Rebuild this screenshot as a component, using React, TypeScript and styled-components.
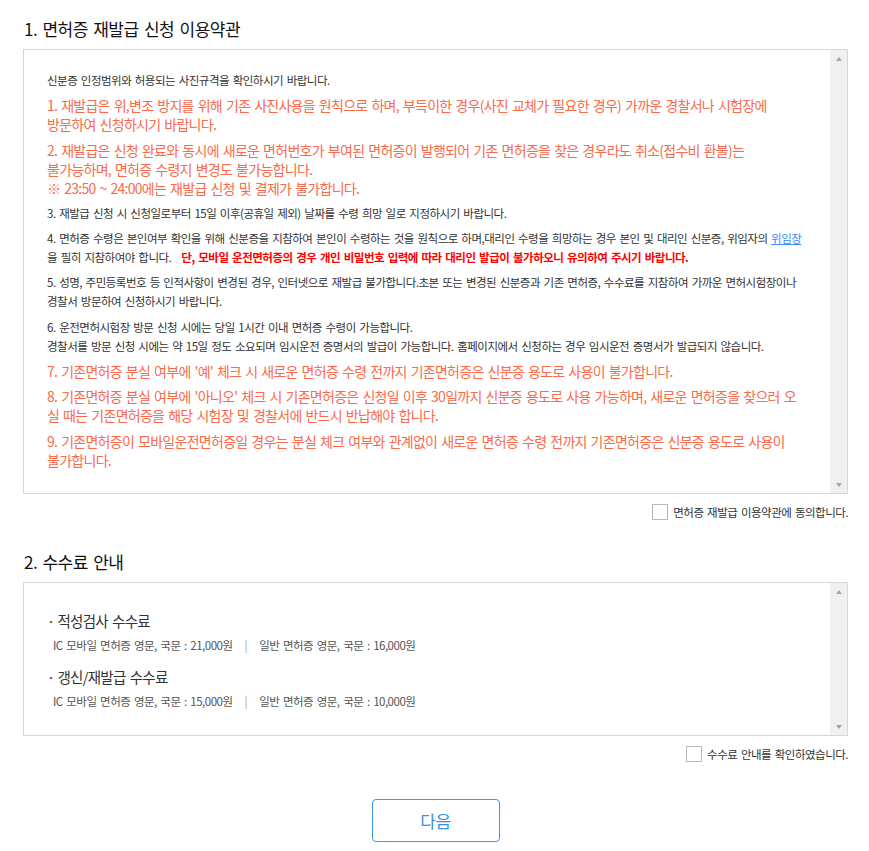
import styled, { createGlobalStyle, css } from "styled-components";

const GlobalStyle = createGlobalStyle`
  html, body {
    margin: 0;
    padding: 0;
    background: #fff;
  }
  body {
    font-family: "Noto Sans CJK KR", "Noto Sans", sans-serif;
    color: #333;
  }
`;

const Page = styled.div`
  width: 825px;
  padding: 18px 21px 40px 23px;
`;

const SectionTitle = styled.h2<{ $spaced?: boolean }>`
  margin: ${(p) => (p.$spaced ? "31px" : "0")} 0 9px 1px;
  font-size: 17px;
  line-height: 22px;
  font-weight: 400;
  letter-spacing: -0.5px;
  word-spacing: 2px;
  color: #111;
`;

const ScrollBox = styled.div<{ $height: number }>`
  display: flex;
  box-sizing: border-box;
  height: ${(p) => p.$height}px;
  border: 1px solid #d7d7d7;
  background: #fff;
`;

const ScrollContent = styled.div<{ $padTop: number }>`
  flex: 1;
  min-width: 0;
  overflow: hidden;
  padding: ${(p) => p.$padTop}px 12px 0 23px;
`;

const Scrollbar = styled.div`
  width: 17px;
  flex-shrink: 0;
  background: #f0f0f0;
  display: flex;
  flex-direction: column;
  justify-content: space-between;
`;

const ArrowCell = styled.div<{ $dir: "up" | "down" }>`
  height: 17px;
  display: flex;
  align-items: center;
  justify-content: center;
  &::after {
    content: "";
    border-left: 3.5px solid transparent;
    border-right: 3.5px solid transparent;
    ${(p) =>
      p.$dir === "up"
        ? "border-bottom: 4px solid #a6a6a6;"
        : "border-top: 4px solid #a6a6a6;"}
  }
`;

const smallText = css`
  font-size: 11.5px;
  letter-spacing: -0.5px;
  word-spacing: 1.5px;
`;

const Note = styled.p<{ $alert?: boolean }>`
  margin: 0 0 6.3px;
  line-height: 19px;
  ${(p) =>
    p.$alert
      ? css`
          font-size: 14px;
          letter-spacing: -0.72px;
          word-spacing: 1.5px;
          color: #fa6a4b;
        `
      : css`
          ${smallText};
          color: #333;
        `}
`;

const Strong = styled.span`
  margin-left: 10px;
  font-weight: 700;
  color: #ff0000;
`;

const Link = styled.a`
  color: #3d8bf7;
  text-decoration: underline;
`;

const FeeHeading = styled.p<{ $gap?: boolean }>`
  margin: ${(p) => (p.$gap ? "12px" : "0")} 0 0;
  font-size: 14.5px;
  line-height: 19px;
  letter-spacing: -0.7px;
  word-spacing: 1.5px;
  color: #333;
`;

const Bullet = styled.span`
  margin: 0 3px 0 0;
`;

const FeeLine = styled.p`
  margin: 6px 0 0 6px;
  line-height: 19px;
  ${smallText};
  color: #555;
`;

const Divider = styled.span`
  margin: 0 12px;
  color: #999;
`;

const AgreeRow = styled.label`
  display: flex;
  justify-content: flex-end;
  align-items: center;
  gap: 5px;
  margin-top: 10px;
  line-height: 16px;
  ${smallText};
  color: #333;
`;

const CheckBox = styled.input`
  appearance: none;
  margin: 0;
  width: 16px;
  height: 16px;
  box-sizing: border-box;
  border: 1px solid #b9b9b9;
  background: #fff;
`;

const NextButton = styled.button`
  display: block;
  margin: 37px auto 0;
  width: 128px;
  height: 43px;
  border: 1px solid #3b97ee;
  border-radius: 4px;
  background: #fff;
  color: #3a8fe8;
  font-family: inherit;
  font-size: 17px;
  letter-spacing: -0.5px;
`;

function ScrollPanel({
  height,
  padTop,
  children,
}: {
  height: number;
  padTop: number;
  children: React.ReactNode;
}) {
  return (
    <ScrollBox $height={height}>
      <ScrollContent $padTop={padTop}>{children}</ScrollContent>
      <Scrollbar>
        <ArrowCell $dir="up" />
        <ArrowCell $dir="down" />
      </Scrollbar>
    </ScrollBox>
  );
}

export default function App() {
  return (
    <>
      <GlobalStyle />
      <Page>
        <SectionTitle>1. 면허증 재발급 신청 이용약관</SectionTitle>
        <ScrollPanel height={445} padTop={21}>
          <Note>신분증 인정범위와 허용되는 사진규격을 확인하시기 바랍니다.</Note>
          <Note $alert>
            1. 재발급은 위,변조 방지를 위해 기존 사진사용을 원칙으로 하며, 부득이한 경우(사진 교체가 필요한 경우) 가까운 경찰서나 시험장에
            <br />
            방문하여 신청하시기 바랍니다.
          </Note>
          <Note $alert>
            2. 재발급은 신청 완료와 동시에 새로운 면허번호가 부여된 면허증이 발행되어 기존 면허증을 찾은 경우라도 취소(접수비 환불)는
            <br />
            불가능하며, 면허증 수령지 변경도 불가능합니다.
            <br />※ 23:50 ~ 24:00에는 재발급 신청 및 결제가 불가합니다.
          </Note>
          <Note>3. 재발급 신청 시 신청일로부터 15일 이후(공휴일 제외) 날짜를 수령 희망 일로 지정하시기 바랍니다.</Note>
          <Note>
            4. 면허증 수령은 본인여부 확인을 위해 신분증을 지참하여 본인이 수령하는 것을 원칙으로 하며,대리인 수령을 희망하는 경우 본인 및 대리인 신분증, 위임자의 <Link>위임장</Link>
            <br />을 필히 지참하여야 합니다.
            <Strong>단, 모바일 운전면허증의 경우 개인 비밀번호 입력에 따라 대리인 발급이 불가하오니 유의하여 주시기 바랍니다.</Strong>
          </Note>
          <Note>
            5. 성명, 주민등록번호 등 인적사항이 변경된 경우, 인터넷으로 재발급 불가합니다.초본 또는 변경된 신분증과 기존 면허증, 수수료를 지참하여 가까운 면허시험장이나
            <br />
            경찰서 방문하여 신청하시기 바랍니다.
          </Note>
          <Note>
            6. 운전면허시험장 방문 신청 시에는 당일 1시간 이내 면허증 수령이 가능합니다.
            <br />
            경찰서를 방문 신청 시에는 약 15일 정도 소요되며 임시운전 증명서의 발급이 가능합니다. 홈페이지에서 신청하는 경우 임시운전 증명서가 발급되지 않습니다.
          </Note>
          <Note $alert>7. 기존면허증 분실 여부에 '예' 체크 시 새로운 면허증 수령 전까지 기존면허증은 신분증 용도로 사용이 불가합니다.</Note>
          <Note $alert>
            8. 기존면허증 분실 여부에 '아니오' 체크 시 기존면허증은 신청일 이후 30일까지 신분증 용도로 사용 가능하며, 새로운 면허증을 찾으러 오
            <br />실 때는 기존면허증을 해당 시험장 및 경찰서에 반드시 반납해야 합니다.
          </Note>
          <Note $alert>
            9. 기존면허증이 모바일운전면허증일 경우는 분실 체크 여부와 관계없이 새로운 면허증 수령 전까지 기존면허증은 신분증 용도로 사용이
            <br />
            불가합니다.
          </Note>
        </ScrollPanel>
        <AgreeRow>
          <CheckBox type="checkbox" />
          면허증 재발급 이용약관에 동의합니다.
        </AgreeRow>

        <SectionTitle $spaced>2. 수수료 안내</SectionTitle>
        <ScrollPanel height={154} padTop={28}>
          <FeeHeading>
            <Bullet>·</Bullet>적성검사 수수료
          </FeeHeading>
          <FeeLine>
            IC 모바일 면허증 영문, 국문 : 21,000원<Divider>|</Divider>일반 면허증 영문, 국문 : 16,000원
          </FeeLine>
          <FeeHeading $gap>
            <Bullet>·</Bullet>갱신/재발급 수수료
          </FeeHeading>
          <FeeLine>
            IC 모바일 면허증 영문, 국문 : 15,000원<Divider>|</Divider>일반 면허증 영문, 국문 : 10,000원
          </FeeLine>
        </ScrollPanel>
        <AgreeRow>
          <CheckBox type="checkbox" />
          수수료 안내를 확인하였습니다.
        </AgreeRow>

        <NextButton type="button">다음</NextButton>
      </Page>
    </>
  );
}
